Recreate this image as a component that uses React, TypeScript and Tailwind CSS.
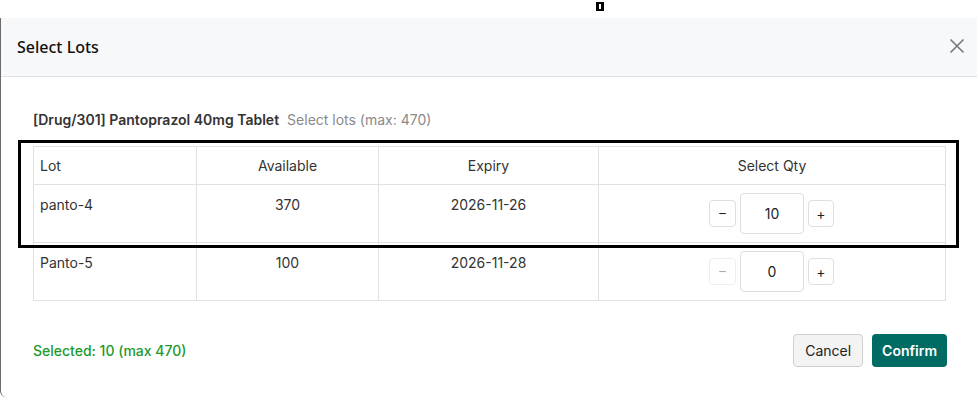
import { useState } from 'react';

type Lot = { lot: string; available: number; expiry: string };

const lots: Lot[] = [
  { lot: 'panto-4', available: 370, expiry: '2026-11-26' },
  { lot: 'Panto-5', available: 100, expiry: '2026-11-28' },
];

export default function App() {
  const [qty, setQty] = useState<number[]>([10, 0]);
  const total = qty.reduce((a, b) => a + b, 0);

  const change = (i: number, d: number) =>
    setQty((q) => q.map((v, j) => (j === i ? Math.max(0, Math.min(lots[i].available, v + d)) : v)));

  return (
    <div className="relative w-[977px] h-[399px] overflow-hidden bg-white" style={{ fontFamily: 'Inter, "Liberation Sans", sans-serif' }}>
      {/* small marker at the top */}
      <div className="absolute left-[596px] top-[2px] w-[8px] h-[9px] bg-black flex items-center justify-center">
        <div className="w-[2px] h-[5px] bg-white" />
      </div>

      <div className="mt-[18px] w-[980px] h-[379px] border-l border-[#6b6b6b] rounded-bl-md bg-white flex flex-col">
        {/* Header */}
        <div className="h-[59px] bg-[#f7f8fa] border-b border-[#dfe2e6] flex items-center justify-between pl-[16px] pr-[14px]">
          <h2 className="text-[16px] font-medium text-[#111] -mt-[1px]" style={{ fontFamily: '"Noto Sans", "Open Sans", sans-serif' }}>Select Lots</h2>
          <svg width="16" height="16" viewBox="0 0 16 16" className="mr-[1px] -mt-[2px]">
            <path d="M1.5 1.5 L14.5 14.5 M14.5 1.5 L1.5 14.5" stroke="#777" strokeWidth="1.6" fill="none" />
          </svg>
        </div>

        {/* Body */}
        <div className="pl-[32px] pr-[34px] pt-[33px]">
          <p className="text-[14px] leading-[20px]">
            <span className="font-semibold text-[#333]">[Drug/301] Pantoprazol 40mg Tablet</span>
            <span className="text-[#8a8a8a] ml-[8px]">Select lots (max: 470)</span>
          </p>

          <table className="mt-[16px] w-[913px] border-collapse text-[14px] text-[#333]">
            <thead>
              <tr className="h-[38px]">
                <th className="w-[163px] border border-[#dfe1e5] px-[6px] text-left font-normal">Lot</th>
                <th className="w-[182px] border border-[#dfe1e5] px-[6px] text-center font-normal">Available</th>
                <th className="w-[220px] border border-[#dfe1e5] px-[6px] text-center font-normal">Expiry</th>
                <th className="border border-[#dfe1e5] px-[6px] text-center font-normal">Select Qty</th>
              </tr>
            </thead>
            <tbody>
              {lots.map((l, i) => (
                <tr key={l.lot} className="h-[58px]">
                  <td className="border border-[#dfe1e5] px-[6px] pt-[9px] align-top leading-[22px]">{l.lot}</td>
                  <td className="border border-[#dfe1e5] px-[6px] pt-[9px] align-top text-center leading-[22px]">{l.available}</td>
                  <td className="border border-[#dfe1e5] px-[6px] pt-[9px] align-top text-center leading-[22px]">{l.expiry}</td>
                  <td className="border border-[#dfe1e5] px-[6px] py-[8px] align-top">
                    <div className="flex items-center justify-center gap-[4px] pr-[1px]">
                      <button
                        onClick={() => change(i, -1)}
                        className={`w-[27px] h-[27px] rounded-[4px] border bg-white text-[13px] leading-none flex items-center justify-center ${qty[i] === 0 ? 'border-[#eceef0] text-[#aaa]' : 'border-[#dcdfe3] text-[#222]'}`}
                      >
                        –
                      </button>
                      <div className="w-[64px] h-[41px] rounded-[4px] border border-[#dcdfe3] flex items-center justify-center text-[14px] text-[#222]">
                        {qty[i]}
                      </div>
                      <button
                        onClick={() => change(i, 1)}
                        className="w-[26px] h-[27px] rounded-[4px] border border-[#dcdfe3] bg-white text-[14px] leading-none text-[#222] flex items-center justify-center"
                      >
                        +
                      </button>
                    </div>
                  </td>
                </tr>
              ))}
            </tbody>
          </table>

          {/* Footer */}
          <div className="mt-[33px] flex items-center justify-between">
            <p className="text-[14px] font-medium text-[#1b9a2c]">Selected: {total} (max 470)</p>
            <div className="flex gap-[9px] -mr-[1px]">
              <button className="h-[33px] px-[11px] rounded-[4px] border border-[#cfcfcf] bg-[#f3f3f3] text-[14px] text-[#222]">Cancel</button>
              <button className="h-[33px] px-[10px] rounded-[4px] bg-[#006b63] text-[14px] font-semibold text-white">Confirm</button>
            </div>
          </div>
        </div>
      </div>

      {/* highlight frame drawn over the first rows */}
      <div className="absolute left-[18px] top-[140px] w-[941px] h-[108px] border-[3px] border-black pointer-events-none" />
    </div>
  );
}
